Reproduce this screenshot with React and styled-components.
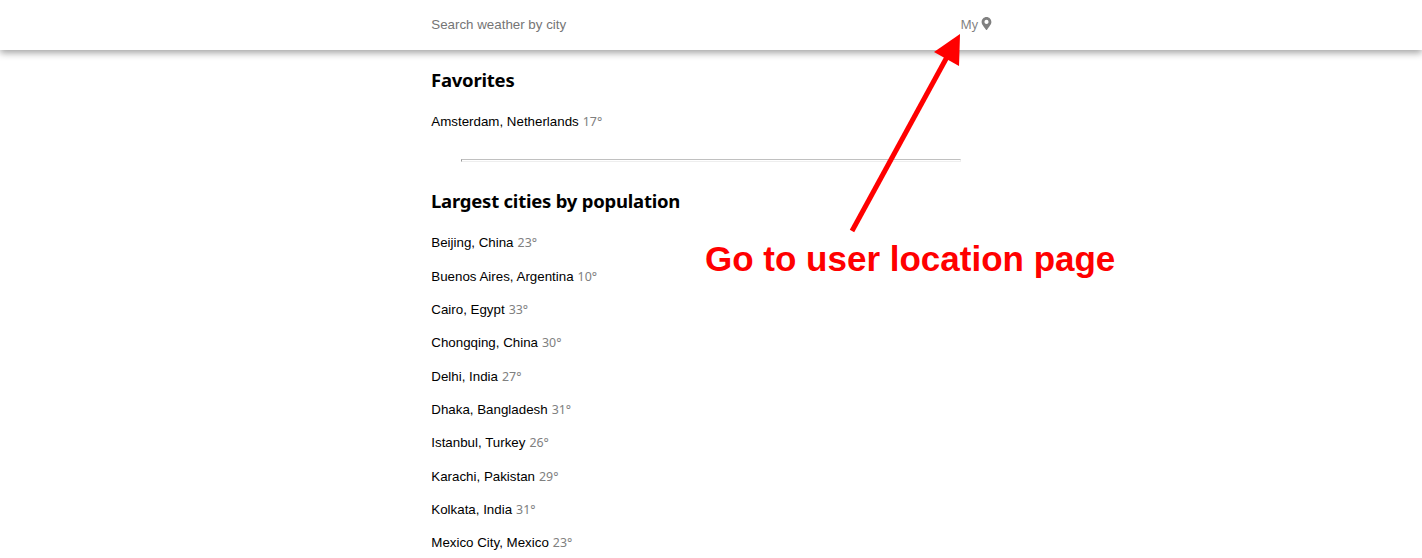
import React from "react";
import styled, { createGlobalStyle } from "styled-components";
import { FaMapMarkerAlt } from "react-icons/fa";

const GlobalStyle = createGlobalStyle`
  body {
    margin: 0;
    height: 558px;
    overflow: hidden;
    background: #fff;
    color: #000;
    font-family: "Liberation Sans", Arial, sans-serif;
    font-size: 13.333px;
  }
`;

const Page = styled.div`
  position: relative;
  height: 558px;
  overflow: hidden;
`;

const Header = styled.header`
  height: 50px;
  display: flex;
  justify-content: center;
  box-shadow: 0 3px 7px rgba(0, 0, 0, 0.36);
`;

const Toolbar = styled.div`
  width: 560px;
  display: flex;
  align-items: center;
  justify-content: space-between;
`;

const SearchInput = styled.input`
  width: 500px;
  padding: 0 0 0 0.3px;
  border: 0;
  outline: 0;
  background: transparent;
  font: inherit;
  line-height: 16px;

  &::placeholder {
    color: #757575;
    opacity: 1;
  }
`;

const LocationLink = styled.a`
  display: flex;
  align-items: center;
  gap: 2px;
  width: 30.5px;
  color: #808080;
  font-family: "Noto Sans", sans-serif;
  font-size: 12.4px;
  line-height: 16px;

  svg {
    flex: none;
    margin-top: -4px;
  }
`;

const Content = styled.main`
  width: 560px;
  margin: 0 auto;
`;

const Title = styled.h2`
  margin: 0;
  padding-top: ${({ $top }) => $top}px;
  height: 24px;
  font-family: "Noto Sans", sans-serif;
  font-size: 18.5px;
  font-weight: 700;
  line-height: 24px;
  letter-spacing: -0.23px;
  white-space: nowrap;
`;

const CityList = styled.ul`
  margin: 0;
  padding: 13px 0 0 0.3px;
  list-style: none;
`;

const City = styled.li`
  height: 33.33px;
  display: flex;
  align-items: baseline;
  gap: 4px;
  line-height: 33px;
  white-space: nowrap;
`;

const Temperature = styled.span`
  color: #808080;
  font-family: "Noto Sans", sans-serif;
  font-size: 12.4px;
  line-height: 16px;
`;

const Divider = styled.hr`
  width: 500px;
  box-sizing: border-box;
  margin: 21px 30px 0;
  height: 3px;
  border: 1px solid;
  border-color: #c0c0c0 #eee #eee #9a9a9a;
`;

const Arrow = styled.svg`
  position: absolute;
  left: 840px;
  top: 30px;
`;

const Annotation = styled.div`
  position: absolute;
  left: 705px;
  top: 239px;
  color: #f00;
  font-size: 35px;
  line-height: 40px;
  font-weight: 700;
  white-space: nowrap;
`;

const favorites = [["Amsterdam, Netherlands", 17]];
const largest = [
  ["Beijing, China", 23],
  ["Buenos Aires, Argentina", 10],
  ["Cairo, Egypt", 33],
  ["Chongqing, China", 30],
  ["Delhi, India", 27],
  ["Dhaka, Bangladesh", 31],
  ["Istanbul, Turkey", 26],
  ["Karachi, Pakistan", 29],
  ["Kolkata, India", 31],
  ["Mexico City, Mexico", 23],
];

const Cities = ({ items }) => (
  <CityList>
    {items.map(([name, degrees]) => (
      <City key={name}>
        <span>{name}</span>
        <Temperature>{degrees}°</Temperature>
      </City>
    ))}
  </CityList>
);

export default function App() {
  return (
    <Page>
      <GlobalStyle />
      <Header>
        <Toolbar>
          <SearchInput placeholder="Search weather by city" />
          <LocationLink>
            My
            <FaMapMarkerAlt size={13} />
          </LocationLink>
        </Toolbar>
      </Header>
      <Content>
        <Title $top={18}>Favorites</Title>
        <Cities items={favorites} />
        <Divider />
        <Title $top={27}>Largest cities by population</Title>
        <Cities items={largest} />
      </Content>
      <Arrow width="130" height="210" viewBox="840 30 130 210">
        <path d="M852 231L947 57" stroke="#f00" strokeWidth="5" />
        <path d="M960 34L934 52L959 66Z" fill="#f00" />
      </Arrow>
      <Annotation>Go to user location page</Annotation>
    </Page>
  );
}
